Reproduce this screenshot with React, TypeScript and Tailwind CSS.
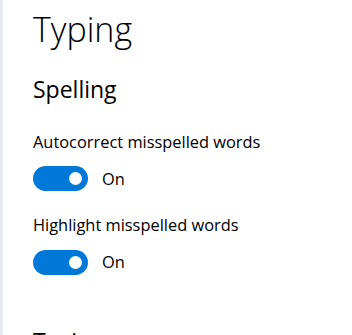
import React from 'react';

const ToggleRow: React.FC<{ label: string; gapTop: string }> = ({ label, gapTop }) => (
    <div>
        <p className={`${gapTop} text-[16.4px] leading-none text-black`}>{label}</p>
        <div className="mt-[16px] flex items-center">
            <div className="w-[55px] h-[25px] rounded-full bg-[#0078d7] flex items-center justify-end pr-[6px]">
                <div className="w-[13px] h-[13px] rounded-full bg-white" />
            </div>
            <span className="ml-[14px] text-[16.4px] leading-none text-black">On</span>
        </div>
    </div>
);

export default function App() {
    return (
        <div className="w-[352px] h-[335px] overflow-hidden bg-white flex" style={{ fontFamily: '"Open Sans", "Noto Sans", sans-serif' }}>
            <div className="w-[3px] shrink-0 bg-[#e9eaee]" />
            <div className="pl-[30px] pt-[12px]">
                <h1 className="text-[34px] leading-none font-light text-black">Typing</h1>
                <h2 className="mt-[32px] text-[23px] leading-none text-black">Spelling</h2>
                <ToggleRow label="Autocorrect misspelled words" gapTop="mt-[33px]" />
                <ToggleRow label="Highlight misspelled words" gapTop="mt-[26px]" />
                <h2 className="mt-[55px] text-[23px] leading-none text-black">Typing</h2>
            </div>
        </div>
    );
}
